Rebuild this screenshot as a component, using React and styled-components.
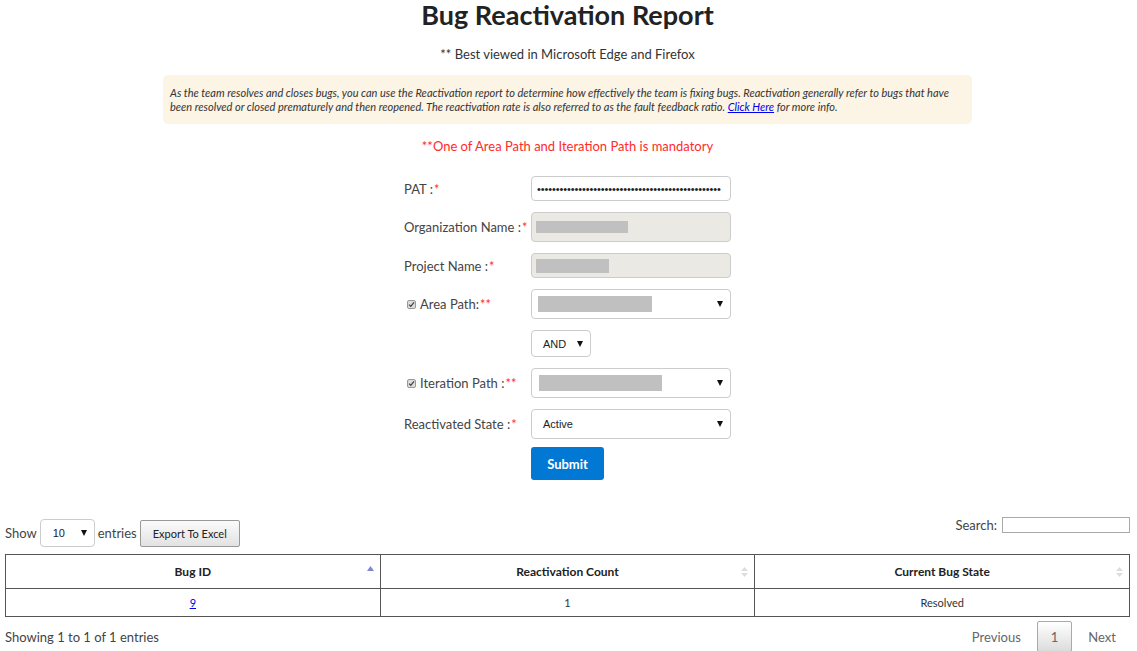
import React from "react";
import styled, { createGlobalStyle } from "styled-components";

const GlobalStyle = createGlobalStyle`
  body {
    margin: 0;
    background: #fff;
    color: #333;
    font-family: Lato, "Liberation Sans", sans-serif;
  }
`;

const Page = styled.div`
  padding: 0 7px 0 5px;
`;

const Title = styled.h1`
  margin: 0;
  text-align: center;
  font-size: 27px;
  line-height: 30px;
  font-weight: 700;
  color: #222;
`;

const Subtitle = styled.p`
  margin: 14px 0 0;
  text-align: center;
  font-size: 13px;
  line-height: 20px;
  color: #333;
`;

const InfoBox = styled.div`
  width: 809px;
  box-sizing: border-box;
  margin: 11px auto 0;
  padding: 11px 9px 10px 7px;
  background: #fcf4e5;
  border-radius: 5px;
  font-size: 11px;
  line-height: 14px;
  font-style: italic;
  color: #333;
`;

const Link = styled.a`
  color: #0000ee;
  text-decoration: underline;
`;

const Mandatory = styled.p`
  margin: 12px 0 0;
  text-align: center;
  font-size: 13px;
  line-height: 20px;
  color: #ff2a2a;
`;

const Form = styled.div`
  margin-top: 20px;
  display: grid;
  grid-template-columns: 127px 200px;
  justify-content: center;
  row-gap: 11px;
  align-items: center;
`;

const Label = styled.label`
  display: flex;
  align-items: center;
  gap: 4px;
  white-space: nowrap;
  font-size: 13px;
  color: #444;
  padding-left: ${(p) => (p.$check ? "3px" : "0")};
`;

const Star = styled.span`
  color: #ff3030;
  margin-left: 1px;
`;

const Field = styled.div`
  box-sizing: border-box;
  height: ${(p) => p.$h || 30}px;
  width: ${(p) => p.$w || 200}px;
  border: 1px solid #ccc;
  border-radius: 4px;
  background: ${(p) => (p.$disabled ? "#eae9e3" : "#fff")};
  display: flex;
  align-items: center;
  position: relative;
  padding: 0 ${(p) => p.$pad ?? 5}px;
  font-family: "Liberation Sans", Arial, sans-serif;
  font-size: 11px;
  color: #222;
`;

const Dots = styled.span`
  font-size: 11px;
  letter-spacing: -0.1px;
  color: #222;
  white-space: nowrap;
  overflow: hidden;
`;

const Redacted = styled.span`
  display: block;
  width: ${(p) => p.$w}px;
  height: ${(p) => p.$h || 16}px;
  background: #c0c0c0;
`;

const Arrow = styled.span`
  position: absolute;
  right: 7px;
  top: 50%;
  margin-top: -3px;
  width: 0;
  height: 0;
  border-left: 3.5px solid transparent;
  border-right: 3.5px solid transparent;
  border-top: 6px solid #111;
`;

const CheckBox = styled.span`
  box-sizing: border-box;
  width: 9px;
  height: 9px;
  border: 1px solid #999;
  border-radius: 2px;
  background: #ddd;
  display: inline-flex;
  align-items: center;
  justify-content: center;
`;

const SubmitButton = styled.button`
  margin-top: -3px;
  width: 73px;
  height: 33px;
  border: none;
  border-radius: 3px;
  background: #0078d4;
  color: #fff;
  font-family: Lato, "Liberation Sans", sans-serif;
  font-size: 13px;
  font-weight: 700;
`;

const Controls = styled.div`
  margin-top: 37px;
  display: flex;
  justify-content: space-between;
  align-items: flex-start;
`;

const LeftControls = styled.div`
  padding-top: 2px;
  display: flex;
  align-items: center;
  gap: 3px;
  font-size: 13px;
  color: #444;
`;

const ExportButton = styled.button`
  height: 27px;
  padding: 0 12px;
  border: 1px solid #999;
  border-radius: 2px;
  background: linear-gradient(#fbfbfb, #e2e2e2);
  font-family: Lato, "Liberation Sans", sans-serif;
  font-size: 11px;
  color: #222;
`;

const SearchBox = styled.label`
  display: flex;
  align-items: center;
  gap: 5px;
  font-size: 13px;
  color: #444;
`;

const SearchInput = styled.input`
  box-sizing: border-box;
  width: 128px;
  height: 16px;
  border: 1px solid #aaa;
  padding: 0 3px;
`;

const Table = styled.table`
  margin-top: 7px;
  width: 100%;
  border-collapse: collapse;
  table-layout: fixed;
`;

const Th = styled.th`
  position: relative;
  height: 33px;
  padding: 0;
  border: 1px solid #555;
  font-size: 12px;
  font-weight: 700;
  color: #222;
  text-align: center;
`;

const Td = styled.td`
  height: 27px;
  padding: 0;
  border: 1px solid #555;
  font-size: 11px;
  color: #333;
  text-align: center;
`;

const SortIcon = styled.svg`
  position: absolute;
  right: 6px;
  top: 50%;
  transform: translateY(-50%);
`;

const Footer = styled.div`
  margin-top: 4px;
  display: flex;
  justify-content: space-between;
  align-items: center;
  font-size: 13px;
  color: #444;
`;

const Pager = styled.div`
  display: flex;
  align-items: center;
`;

const PageItem = styled.span`
  box-sizing: border-box;
  height: 31px;
  display: inline-flex;
  align-items: center;
  padding: 0 13px;
  margin-left: 2px;
  font-size: 13px;
  color: #666;
  border: 1px solid ${(p) => (p.$current ? "#aaa" : "transparent")};
  border-radius: 2px;
  background: ${(p) =>
    p.$current ? "linear-gradient(#fff, #dcdcdc)" : "transparent"};
`;

const Check = () => (
  <CheckBox>
    <svg width="7" height="7" viewBox="0 0 7 7">
      <path d="M1 3.6 L2.8 5.3 L6 1.4" fill="none" stroke="#444" strokeWidth="1.3" />
    </svg>
  </CheckBox>
);

const SortBoth = () => (
  <SortIcon width="7" height="10" viewBox="0 0 7 10">
    <path d="M0 4 L3.5 0 L7 4 Z" fill="#ddd" />
    <path d="M0 6 L3.5 10 L7 6 Z" fill="#ddd" />
  </SortIcon>
);

const SortAsc = () => (
  <SortIcon width="7" height="10" viewBox="0 0 7 10" style={{ marginTop: -2 }}>
    <path d="M0 6 L3.5 1 L7 6 Z" fill="#7f86d6" />
  </SortIcon>
);

const App = () => (
  <Page>
    <GlobalStyle />
    <Title>Bug Reactivation Report</Title>
    <Subtitle>** Best viewed in Microsoft Edge and Firefox</Subtitle>
    <InfoBox>
      As the team resolves and closes bugs, you can use the Reactivation report to
      determine how effectively the team is fixing bugs. Reactivation generally
      refer to bugs that have been resolved or closed prematurely and then
      reopened. The reactivation rate is also referred to as the fault feedback
      ratio. <Link href="#">Click Here</Link> for more info.
    </InfoBox>
    <Mandatory>**One of Area Path and Iteration Path is mandatory</Mandatory>

    <Form>
      <Label>
        <span>PAT :<Star>*</Star></span>
      </Label>
      <Field $h={25}>
        <Dots>{"•".repeat(49)}</Dots>
      </Field>

      <Label>
        <span>Organization Name :<Star>*</Star></span>
      </Label>
      <Field $disabled $h={30} $pad={4}>
        <Redacted $w={92} $h={12} />
      </Field>

      <Label>
        <span>Project Name :<Star>*</Star></span>
      </Label>
      <Field $disabled $h={25} $pad={4}>
        <Redacted $w={73} $h={14} />
      </Field>

      <Label $check>
        <Check />
        <span>Area Path:<Star>**</Star></span>
      </Label>
      <Field $h={30} $pad={6}>
        <Redacted $w={114} $h={16} />
        <Arrow />
      </Field>

      <span />
      <Field $h={27} $w={60} $pad={11}>
        AND
        <Arrow />
      </Field>

      <Label $check>
        <Check />
        <span>Iteration Path :<Star>**</Star></span>
      </Label>
      <Field $h={30} $pad={7}>
        <Redacted $w={123} $h={16} />
        <Arrow />
      </Field>

      <Label>
        <span>Reactivated State :<Star>*</Star></span>
      </Label>
      <Field $h={30} $pad={11}>
        Active
        <Arrow />
      </Field>

      <span />
      <SubmitButton>Submit</SubmitButton>
    </Form>

    <Controls>
      <LeftControls>
        Show
        <Field $h={28} $w={55} $pad={12}>
          10
          <Arrow />
        </Field>
        entries
        <ExportButton>Export To Excel</ExportButton>
      </LeftControls>
      <SearchBox>
        Search:
        <SearchInput />
      </SearchBox>
    </Controls>

    <Table>
      <thead>
        <tr>
          <Th>
            Bug ID
            <SortAsc />
          </Th>
          <Th>
            Reactivation Count
            <SortBoth />
          </Th>
          <Th>
            Current Bug State
            <SortBoth />
          </Th>
        </tr>
      </thead>
      <tbody>
        <tr>
          <Td>
            <Link href="#">9</Link>
          </Td>
          <Td>1</Td>
          <Td>Resolved</Td>
        </tr>
      </tbody>
    </Table>

    <Footer>
      <span>Showing 1 to 1 of 1 entries</span>
      <Pager>
        <PageItem>Previous</PageItem>
        <PageItem $current>1</PageItem>
        <PageItem>Next</PageItem>
      </Pager>
    </Footer>
  </Page>
);

export default App;
